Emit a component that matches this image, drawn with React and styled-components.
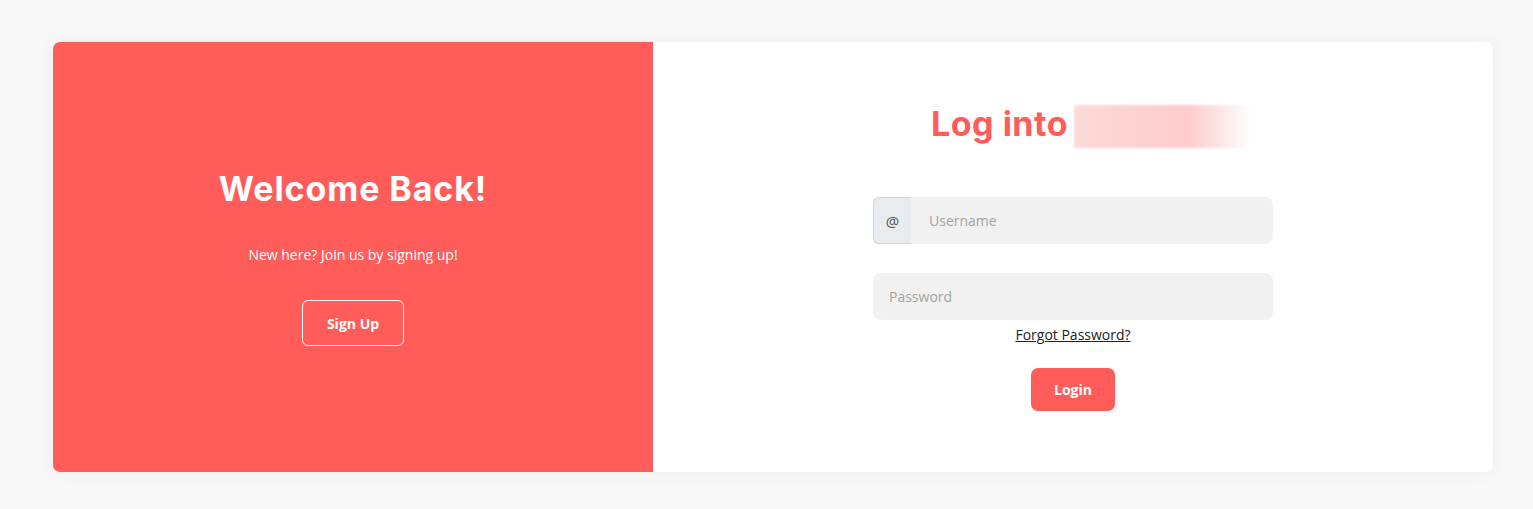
import React from 'react';
import styled, { createGlobalStyle } from 'styled-components';

const GlobalStyle = createGlobalStyle`
  html, body {
    margin: 0;
    padding: 0;
    background: #f8f8f8;
    font-family: "Open Sans", "Liberation Sans", sans-serif;
  }
`;

const RED = '#ff5c5a';

const Page = styled.div`
  padding: 42px 40px 37px 53px;
`;

const Card = styled.div`
  display: flex;
  width: 1440px;
  height: 430px;
  border-radius: 7px;
  overflow: hidden;
  background: #fff;
  box-shadow: 0 0 18px rgba(0, 0, 0, 0.05);
`;

const SidePanel = styled.div`
  width: 600px;
  background: ${RED};
  color: #fff;
  display: flex;
  flex-direction: column;
  align-items: center;
  justify-content: center;
  padding-bottom: 4px;
  box-sizing: border-box;
`;

const Heading = styled.h1`
  margin: 0;
  font-family: "Inter", "Noto Sans", sans-serif;
  font-weight: 700;
  font-size: 34px;
  line-height: 50px;
  letter-spacing: ${p => p.$spacing ?? 0.9}px;
  color: ${p => p.$color || '#fff'};
`;

const Subtitle = styled.p`
  margin: 31px 0 35px;
  font-size: 14px;
  line-height: 20px;
`;

const OutlineButton = styled.button`
  width: 102px;
  height: 46px;
  border: 1px solid #fff;
  border-radius: 6px;
  background: transparent;
  color: #fff;
  font-family: "Open Sans", sans-serif;
  font-weight: 700;
  font-size: 14px;
  cursor: pointer;
`;

const FormPanel = styled.div`
  flex: 1;
  display: flex;
  flex-direction: column;
  align-items: center;
  padding-top: 57px;
`;

const TitleRow = styled.div`
  display: flex;
  align-items: center;
  gap: 6px;
  margin: 0 0 48px 36px;
`;

const BlurredName = styled.div`
  width: 177px;
  height: 43px;
  margin-top: 4px;
  background: linear-gradient(90deg, #fddada 0%, #fdd0d0 40%, #fdcccc 65%, #ffffff 100%);
  filter: blur(1px);
`;

const Form = styled.form`
  width: 400px;
  display: flex;
  flex-direction: column;
  align-items: center;
`;

const InputGroup = styled.div`
  display: flex;
  width: 100%;
  height: 47px;
  margin-bottom: ${p => p.$mb || 0}px;
`;

const Prepend = styled.span`
  width: 38px;
  box-sizing: border-box;
  display: flex;
  align-items: center;
  justify-content: center;
  background: #e9ecef;
  border: 1px solid #ced4da;
  border-right: none;
  border-radius: 6px 0 0 6px;
  color: #495057;
  font-size: 15px;
`;

const Input = styled.input`
  flex: 1;
  min-width: 0;
  border: none;
  outline: none;
  background: #f1f1f1;
  border-radius: ${p => (p.$joined ? '0 8px 8px 0' : '8px')};
  padding: 0 ${p => (p.$joined ? 18 : 16)}px;
  font-family: "Open Sans", sans-serif;
  font-size: 14px;
  color: #333;
  &::placeholder {
    color: #a3a3a3;
  }
`;

const ForgotLink = styled.a`
  margin-top: 5px;
  font-size: 14px;
  line-height: 20px;
  color: #222;
  text-decoration: underline;
`;

const SubmitButton = styled.button`
  margin-top: 23px;
  width: 84px;
  height: 43px;
  border: none;
  border-radius: 7px;
  background: ${RED};
  color: #fff;
  font-family: "Open Sans", sans-serif;
  font-weight: 700;
  font-size: 14px;
  cursor: pointer;
`;

export default function App() {
  return (
    <>
      <GlobalStyle />
      <Page>
        <Card>
          <SidePanel>
            <Heading>Welcome Back!</Heading>
            <Subtitle>New here? Join us by signing up!</Subtitle>
            <OutlineButton type="button">Sign Up</OutlineButton>
          </SidePanel>
          <FormPanel>
            <TitleRow>
              <Heading $color={RED} $spacing={0.5}>Log into</Heading>
              <BlurredName />
            </TitleRow>
            <Form onSubmit={e => e.preventDefault()}>
              <InputGroup $mb={29}>
                <Prepend>@</Prepend>
                <Input $joined placeholder="Username" />
              </InputGroup>
              <InputGroup>
                <Input type="password" placeholder="Password" />
              </InputGroup>
              <ForgotLink href="#">Forgot Password?</ForgotLink>
              <SubmitButton type="submit">Login</SubmitButton>
            </Form>
          </FormPanel>
        </Card>
      </Page>
    </>
  );
}
